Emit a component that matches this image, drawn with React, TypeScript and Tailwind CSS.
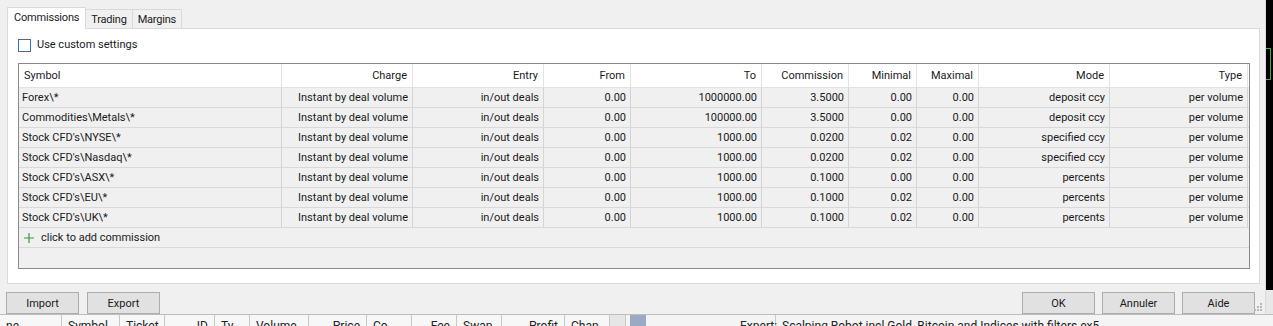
const cols = [
  { key: "symbol", label: "Symbol", w: "w-[263px]", left: true },
  { key: "charge", label: "Charge", w: "w-[131px]" },
  { key: "entry", label: "Entry", w: "w-[131px]" },
  { key: "from", label: "From", w: "w-[87px]" },
  { key: "to", label: "To", w: "w-[131px]" },
  { key: "commission", label: "Commission", w: "w-[87px]" },
  { key: "minimal", label: "Minimal", w: "w-[68px]" },
  { key: "maximal", label: "Maximal", w: "w-[62px]" },
  { key: "mode", label: "Mode", w: "w-[131px]" },
  { key: "type", label: "Type", w: "w-[138px]" },
];

const rows: string[][] = [
  ["Forex\\*", "Instant by deal volume", "in/out deals", "0.00", "1000000.00", "3.5000", "0.00", "0.00", "deposit ccy", "per volume"],
  ["Commodities\\Metals\\*", "Instant by deal volume", "in/out deals", "0.00", "100000.00", "3.5000", "0.00", "0.00", "deposit ccy", "per volume"],
  ["Stock CFD's\\NYSE\\*", "Instant by deal volume", "in/out deals", "0.00", "1000.00", "0.0200", "0.02", "0.00", "specified ccy", "per volume"],
  ["Stock CFD's\\Nasdaq\\*", "Instant by deal volume", "in/out deals", "0.00", "1000.00", "0.0200", "0.02", "0.00", "specified ccy", "per volume"],
  ["Stock CFD's\\ASX\\*", "Instant by deal volume", "in/out deals", "0.00", "1000.00", "0.1000", "0.00", "0.00", "percents", "per volume"],
  ["Stock CFD's\\EU\\*", "Instant by deal volume", "in/out deals", "0.00", "1000.00", "0.1000", "0.02", "0.00", "percents", "per volume"],
  ["Stock CFD's\\UK\\*", "Instant by deal volume", "in/out deals", "0.00", "1000.00", "0.1000", "0.02", "0.00", "percents", "per volume"],
];

const bottomCols = [
  { label: "ne", w: "w-[62px]", right: false },
  { label: "Symbol", w: "w-[58px]", right: false },
  { label: "Ticket", w: "w-[45px]", right: false },
  { label: "ID", w: "w-[50px]", right: true },
  { label: "Ty...", w: "w-[35px]", right: false },
  { label: "Volume", w: "w-[59px]", right: false },
  { label: "Price", w: "w-[58px]", right: true },
  { label: "Co...", w: "w-[45px]", right: false },
  { label: "Fee", w: "w-[45px]", right: true },
  { label: "Swap", w: "w-[45px]", right: false },
  { label: "Profit", w: "w-[63px]", right: true },
  { label: "Chan...", w: "w-[45px]", right: false },
];

function Button({ label }: { label: string }) {
  return (
    <button className="w-[73px] h-[22px] bg-[#e1e1e1] border border-[#adadad] text-[#1a1a1a] leading-none pt-[1px]">
      {label}
    </button>
  );
}

export default function App() {
  return (
    <div className="w-[1273px] h-[326px] overflow-hidden bg-[#f0f0f0] font-['Roboto',sans-serif] text-[11px] text-[#1a1a1a]">
      <div className="flex h-[314px]">
        {/* Dialog */}
        <div className="w-[1266px] h-[314px] bg-[#f0f0f0] border-r border-[#dadada] relative flex flex-col">
          {/* Tabs */}
          <div className="flex items-end pl-[7px] pt-[6px] h-[28px] tracking-[-0.2px]">
            <div className="h-[22px] px-[6px] bg-white border border-b-0 border-[#d9d9d9] flex items-center relative z-10 -mb-px">
              Commissions
            </div>
            <div className="h-[19px] px-[5px] pt-[2px] border border-l-0 border-b-0 border-[#d9d9d9] bg-[#f0f0f0] flex items-center">
              Trading
            </div>
            <div className="h-[19px] px-[5px] pt-[2px] border border-l-0 border-b-0 border-[#d9d9d9] bg-[#f0f0f0] flex items-center">
              Margins
            </div>
          </div>

          {/* Tab pane */}
          <div className="ml-[7px] w-[1253px] h-[256px] bg-white border border-[#d9d9d9] px-[10px] pt-[9px]">
            <div className="flex items-center gap-[6px] h-[14px]">
              <div className="w-[13px] h-[13px] border border-[#2b72bb] bg-white" />
              <span className="pt-[1px]">Use custom settings</span>
            </div>

            {/* Table */}
            <div className="mt-[11px] w-[1232px] h-[206px] border border-[#8a8a8a] bg-[#f0f0f0] flex flex-col">
              <div className="flex h-[24px] bg-white border-b border-[#e3e3e3]">
                {cols.map((c) => (
                  <div
                    key={c.key}
                    className={`${c.w} shrink-0 border-r border-[#e3e3e3] flex items-center pt-[1px] px-[5px] ${c.left ? "justify-start pl-[5px]" : "justify-end"}`}
                  >
                    {c.label}
                  </div>
                ))}
              </div>
              {rows.map((r, i) => (
                <div key={i} className="flex h-[20px] bg-[#f0f0f0] border-b border-[#d9d9d9]">
                  {r.map((v, j) => (
                    <div
                      key={j}
                      className={`${cols[j].w} shrink-0 border-r border-[#d4d4d4] flex items-center pt-[2px] ${j === 0 ? "justify-start pl-[3px]" : "justify-end pr-[4px]"}`}
                    >
                      {v}
                    </div>
                  ))}
                </div>
              ))}
              <div className="flex items-center h-[20px] border-b border-[#d9d9d9] pl-[4px] gap-[6px]">
                <svg width="12" height="12" viewBox="0 0 12 12">
                  <path d="M6 1v10M1 6h10" stroke="#3c9a3c" strokeWidth="1.2" />
                </svg>
                <span className="pt-[1px]">click to add commission</span>
              </div>
            </div>
          </div>

          {/* Buttons */}
          <div className="flex items-center justify-between px-[6px] pt-[8px] pr-[10px]">
            <div className="flex gap-[8px]">
              <Button label="Import" />
              <Button label="Export" />
            </div>
            <div className="flex gap-[7px]">
              <Button label="OK" />
              <Button label="Annuler" />
              <Button label="Aide" />
            </div>
          </div>

          {/* resize grip */}
          <svg className="absolute right-[2px] bottom-[2px]" width="10" height="10" viewBox="0 0 10 10">
            <g fill="#b8b8b8">
              <rect x="7" y="1" width="2" height="2" />
              <rect x="4" y="4" width="2" height="2" />
              <rect x="7" y="4" width="2" height="2" />
              <rect x="1" y="7" width="2" height="2" />
              <rect x="4" y="7" width="2" height="2" />
              <rect x="7" y="7" width="2" height="2" />
            </g>
          </svg>
        </div>

        {/* Chart edge behind the dialog */}
        <div className="flex-1 bg-black flex flex-col">
          <div className="h-[48px]" />
          <div className="w-[5px] h-[32px] border border-l-0 border-[#3fae3f]" />
          <div className="flex-1" />
          <div className="h-[24px] bg-[#e8e8e8]" />
        </div>
      </div>

      {/* Terminal strip behind */}
      <div className="h-[12px] flex overflow-hidden bg-[#f4f4f4] border-t border-[#bdbdbd] text-[12px] leading-[22px] text-[#222]">
        <div className="flex w-[610px] bg-[#f7f7f7]">
          {bottomCols.map((c, i) => (
            <div
              key={i}
              className={`${c.w} shrink-0 border-r border-[#c8c8c8] px-[6px] flex ${c.right ? "justify-end" : "justify-start"}`}
            >
              {c.label}
            </div>
          ))}
        </div>
        <div className="w-[16px] bg-[#e6e6e6] border-r border-[#c8c8c8]" />
        <div className="w-[4px]" />
        <div className="w-[16px] bg-[#9aa9c4]" />
        <div className="w-[94px]" />
        <div className="w-[36px] border-r border-[#c8c8c8]">Expert:</div>
        <div className="pl-[6px] whitespace-nowrap">Scalping Robot incl Gold, Bitcoin and Indices with filters ex5</div>
      </div>
    </div>
  );
}
